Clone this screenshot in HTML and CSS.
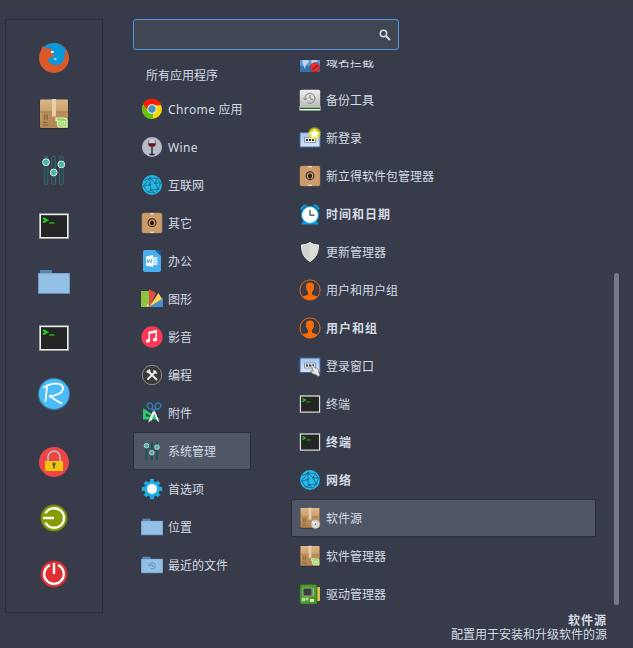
FILE: index.html
```html
<!DOCTYPE html>
<html lang="zh-CN">
<head>
<meta charset="utf-8">
<title>应用程序菜单</title>
<link rel="stylesheet" href="styles.css">
</head>
<body>
<svg class="defs" aria-hidden="true">
  <defs>
    <linearGradient id="card" x1="0" y1="0" x2="0" y2="1"><stop offset="0" stop-color="#dcb98a"/><stop offset=".45" stop-color="#c79c68"/><stop offset="1" stop-color="#b58a58"/></linearGradient>
    <linearGradient id="grey" x1="0" y1="0" x2="0" y2="1"><stop offset="0" stop-color="#eeeeee"/><stop offset="1" stop-color="#b9b9b7"/></linearGradient>
    <linearGradient id="screen" x1="0" y1="0" x2="0" y2="1"><stop offset="0" stop-color="#a9c3e6"/><stop offset="1" stop-color="#d9e5f3"/></linearGradient>
    <radialGradient id="glow"><stop offset="0" stop-color="#fff200"/><stop offset=".65" stop-color="#f7ea10" stop-opacity=".85"/><stop offset="1" stop-color="#f7ea10" stop-opacity="0"/></radialGradient>
  </defs>
  <symbol id="firefox" viewBox="0 0 32 32">
    <circle cx="16" cy="16" r="15" fill="#dd5827"/>
    <path d="M6 5C9 2 14 1 18 1c5 1 10 5 11 10l-2-2c0 8-2 13-7 14-4 1-7-1-9-4-2-3 0-5 4-4l1-3-3-1 1-3-3-2-3 1z" fill="#0699dc"/>
    <path d="M3 8l2-4 3 3 4 0 2 3-1 3 2 2-4 1c-2 2 0 5 1 6l-7-4z" fill="#dd5827"/>
    <path d="M10 17q2-2 5-1l1 3q-2 3-4 2-2-2-2-4z" fill="#0699dc"/>
    <path d="M13 9l3 0-1 2-2 0zM16 16l3 1-2 1.500z" fill="#fff"/>
  </symbol>
  <symbol id="box" viewBox="0 0 32 32">
    <rect x="1.500" y="2" width="29" height="29.200" rx="1.500" fill="#29292e"/>
    <rect x="2" y="1.500" width="28" height="28.500" rx="1" fill="url(#card)"/>
    <path d="M4 14H28V28.500H4z" fill="#a67b4b" opacity=".35"/>
    <path d="M2 14H30" stroke="#9a7347" stroke-width=".7"/>
    <path d="M14 1H18V18.500H14z" fill="#e6cfa9"/>
    <path d="M6 16.500h1.500v5H6zM8.500 16.500H10v5H8.500zM5 24h4.500v1H5zM5 26.500h5v1H5z" fill="#7e592f" opacity=".7"/>
  </symbol>
  <symbol id="mintbox" viewBox="0 0 32 32">
    <use href="#box"/>
    <path d="M18 20H25.500q3.500 0 3.500 3.500V29H22.500q-3 0-3-3V22.500H18z" fill="#92d65a" stroke="#e3f4cd" stroke-width="1.200"/>
    <path d="M22 22.500v2.500q0 1.500 1.500 1.500h3v-3h-2.500v1.500" fill="none" stroke="#eefae0" stroke-width="1"/>
  </symbol>
  <symbol id="discbox" viewBox="0 0 32 32">
    <use href="#box"/>
    <circle cx="24" cy="25" r="6.500" fill="#d9d8d8" stroke="#999"/><path d="M24 25L18 22.500 20 20z" fill="#fff"/><circle cx="24" cy="25" r="1.900" fill="#8b6f52" stroke="#fff"/>
  </symbol>
  <symbol id="sliders" viewBox="0 0 32 32">
    <path d="M8 4V28.500M15.700 4V28.500M23.300 4V28.500" stroke="#466774" stroke-width="4.600" stroke-linecap="round"/>
    <path d="M8 4V28.500M15.700 4V28.500M23.300 4V28.500" stroke="#2a4a58" stroke-width="3.200" stroke-linecap="round"/>
    <g fill="#43b8a2" stroke="#d9eee9" stroke-width="1"><circle cx="8" cy="8.200" r="3.400"/><circle cx="15.700" cy="18.500" r="3.400"/><circle cx="23.300" cy="10.400" r="3.400"/></g>
  </symbol>
  <symbol id="term" viewBox="0 0 32 32">
    <path d="M1 3H31V29H1z" fill="#8d8f90"/><path d="M1.700 4H30.300V28.200H1.700z" fill="#eceeed"/><path d="M3 5.200H29V27H3z" fill="#242424"/>
    <path d="M5 8l4 2.200L5 12.400" fill="none" stroke="#28ce1d" stroke-width="2"/><path d="M11 13h5.500" stroke="#219b20" stroke-width="1.800"/>
  </symbol>
  <symbol id="folder" viewBox="0 0 32 32">
    <path d="M2 4H14V9H2z" fill="#528ab5"/><path d="M0 7H32V28H0z" fill="#638eb0"/><path d="M.700 7.500H31.300V27H.700z" fill="#93c0e4"/>
  </symbol>
  <symbol id="recent" viewBox="0 0 32 32">
    <use href="#folder"/><path d="M12 16a4.500 4.500 0 1 1 2 5M10.500 15l1.500 2.500 2.200-1.500M16 14.500v3l2.500 1" fill="none" stroke="#5188b4" stroke-width="1.200"/>
  </symbol>
  <symbol id="rlogo" viewBox="0 0 32 32">
    <circle cx="16" cy="16" r="16" fill="#3380aa"/><circle cx="16" cy="16" r="15" fill="#4bbcf8"/>
    <path d="M9 9L7.500 23M6 9.500C10 6 18 4.500 22.500 6.500c4 2 3 7-2 9.500-3 1.500-7 2.200-9.500 2.200 5 1.500 8 6 12.500 7" fill="none" stroke="#fff" stroke-width="1.800" stroke-linecap="round"/>
  </symbol>
  <symbol id="lock" viewBox="0 0 32 32">
    <circle cx="16" cy="16" r="15" fill="#ee4646"/><path d="M10 15V11a6 6 0 0 1 12 0v4" fill="none" stroke="#bbbcc5" stroke-width="1.600"/>
    <path d="M7 15H25V25H7z" fill="#f2c511"/><circle cx="16" cy="18" r="1.500" fill="#37424a"/><path d="M16 18V22.500" stroke="#37424a" stroke-width="1.300"/>
  </symbol>
  <symbol id="logout" viewBox="0 0 32 32">
    <circle cx="16" cy="16" r="13.500" fill="#6d8011"/><circle cx="16" cy="16" r="12.600" fill="#879c00"/>
    <path d="M7.500 11.500a9.800 9.800 0 1 1 0 9M5 16H16" fill="none" stroke="#fff" stroke-width="2.400"/>
  </symbol>
  <symbol id="power" viewBox="0 0 32 32">
    <circle cx="16" cy="16" r="13.500" fill="#bd3032"/><circle cx="16" cy="16" r="12.600" fill="#de3030"/>
    <path d="M12 7.100a9.800 9.800 0 1 0 8 0M16 5V16" fill="none" stroke="#fff" stroke-width="2.400"/>
  </symbol>
  <symbol id="chrome" viewBox="0 0 22 22">
    <circle cx="11" cy="11" r="10" fill="#f8d806"/>
    <path d="M2 6.500A10 10 0 0 1 20.300 7.200H11L7 13z" fill="#fb1b08"/>
    <path d="M2 6.500L7.200 14 12.500 14.500 11.500 21A10 10 0 0 1 2 6.500z" fill="#62c40e"/>
    <circle cx="11" cy="11" r="4.800" fill="#f2f4ee"/><circle cx="11" cy="11" r="3.700" fill="#4194bd"/>
  </symbol>
  <symbol id="wine" viewBox="0 0 22 22">
    <circle cx="11" cy="11" r="10" fill="#b9bdc9"/>
    <path d="M8 4C6.500 9 8 11 11 11s4.500-2 3-7" fill="#ccd0d6" stroke="#625f66" stroke-width=".8"/><path d="M7.500 7.200h7c.2 2.600-1.500 3.500-3.500 3.500s-3.700-.9-3.500-3.500z" fill="#700d17"/>
    <path d="M11 11v7M8.500 18.500h5" stroke="#282329" stroke-width="1.400"/>
  </symbol>
  <symbol id="globe" viewBox="0 0 22 22">
    <circle cx="11" cy="11" r="9.900" fill="#22bbed"/>
    <path d="M3 6.500L9 4l7 .5L19.500 9l-2 6-4 4-7-1-4-6L9 4M2.500 12l6.500-1.500L10 16l7.500-1M10 16l-3.500 2M16.500 4.500L14 9l3.500 6M14 9l5.500 0M9 4l5 5M9 10.500V4M10 16l3.500 3" fill="none" stroke="#245d78" stroke-width=".8"/>
    <g fill="#1a5876"><circle cx="9" cy="4" r=".9"/><circle cx="9" cy="10.500" r=".9"/><circle cx="14" cy="9" r=".9"/><circle cx="10" cy="16" r=".9"/><circle cx="17" cy="15" r=".9"/></g>
  </symbol>
  <symbol id="package" viewBox="0 0 22 22">
    <rect x="1" y="1" width="20" height="20" rx="1.700" fill="#cb9c6c" stroke="#ad8058" stroke-width=".5"/><path d="M9 1h4v1.500H9zM9 19.500h4V21H9z" fill="#efcfa9"/>
    <circle cx="11" cy="10.700" r="3.900" fill="none" stroke="#36271c" stroke-width="1.100"/><path d="M11 7.500v5M9.500 9.500h3v2.500L11 13.500 9.500 12z" fill="#291b15" stroke="#291b15" stroke-width=".7"/>
  </symbol>
  <symbol id="office" viewBox="0 0 22 22">
    <path d="M3.500 0H14l6 6v14q0 2-1.500 2h-15Q2 22 2 20V2Q2 0 3.500 0z" fill="#4aaeec"/><path d="M14 0h6v6z" fill="#155f96"/><path d="M5 6.500l7-1.500v12l-7-1.500z" fill="#fff"/><path d="M12 7h4.500v8H12z" fill="#d4eefb"/><path d="M6.200 9l.8 4 1.400-3.500L9.800 13l.8-4" stroke="#4aaeec" fill="none"/><path d="M13 8.500h3M13 10.500h3M13 12.500h3" stroke="#8bcced" stroke-width=".6"/>
  </symbol>
  <symbol id="graphics" viewBox="0 0 22 22">
    <path d="M0 3h8v16H0z" fill="#8bc53f"/><path d="M8 1l7 4-6.500 14H8z" fill="#e74a4a"/><path d="M22 9.500V19H8z" fill="#488ed0"/><path d="M17.500 5l3.500 6L8 19z" fill="#ffd64e"/><circle cx="6.500" cy="17.300" r=".9" fill="#fff"/>
  </symbol>
  <symbol id="music" viewBox="0 0 22 22">
    <circle cx="11" cy="11" r="10.700" fill="#fb3954"/><path d="M8.200 14.500V6.500L15.200 5v8" fill="none" stroke="#fff" stroke-width="1.500"/><path d="M8 5.800L16 4v2.500L8 8z" fill="#fff"/><ellipse cx="7" cy="15" rx="2.200" ry="1.800" fill="#fff"/><ellipse cx="14" cy="13.700" rx="2.200" ry="1.800" fill="#fff"/>
  </symbol>
  <symbol id="tools" viewBox="0 0 22 22">
    <circle cx="11" cy="11" r="9.700" fill="#3c3838" stroke="#92908e" stroke-width="1"/><path d="M7 7l8.500 8.500M14.500 7.500L7 15" stroke="#ececea" stroke-width="1.900" stroke-linecap="round"/><path d="M5.500 7.500l2 1.200 1.500-1.500-1-2M13 5.700a2.500 2.500 0 0 0 3.200 3.200" stroke="#ececea" stroke-width="1.200" fill="none"/>
  </symbol>
  <symbol id="accessory" viewBox="0 0 22 22">
    <path d="M2 6v11.500h17.500zM5 11.500v3h5.500z" fill="#2bc76c" fill-rule="evenodd"/><path d="M13 6.500L7 20.500l3.500-2L13 12l3 6.500 2.500 2z" fill="#eff4f6"/><g fill="none" stroke="#2d78ae" stroke-width="1.500"><ellipse cx="9" cy="4" rx="2.600" ry="3" transform="rotate(-25 9 4)"/><ellipse cx="17" cy="4" rx="2.600" ry="3" transform="rotate(25 17 4)"/><path d="M10.500 6.500L13 9l2.500-2.500"/></g>
  </symbol>
  <symbol id="gear" viewBox="0 0 22 22">
    <g stroke="#22aee1" stroke-width="3.800"><path d="M11 .8V21.200M.8 11H21.200"/><path d="M4 4l14 14M18 4L4 18"/></g><circle cx="11" cy="11" r="7.800" fill="#22aee1"/><circle cx="11" cy="11" r="5" fill="#fff"/>
  </symbol>
  <symbol id="block" viewBox="0 0 22 22">
    <path d="M1 3h20v18H1z" fill="#3672af"/><path d="M1 3h20v12H1z" fill="#5b93cc"/><path d="M3 8h6l1 3-3 3-1 4-2-4zM12 7h7l-1 4-3 1-2 4z" fill="#b9d7f0"/><circle cx="16" cy="16.500" r="4.700" fill="#e5302d" stroke="#a4151a" stroke-width=".5"/><path d="M13.500 18.500l5-4" stroke="#8f1719" stroke-width="1.600"/>
  </symbol>
  <symbol id="backup" viewBox="0 0 22 22">
    <path d="M.5 17h21v4.500H.5z" fill="#eef0ee"/><path d="M1 18.500h20V20H1z" fill="#166c18"/><rect x=".8" y=".7" width="20.400" height="17.500" rx="1.500" fill="url(#grey)"/><path d="M6 10a5 5 0 1 1 2.500 3.700M4.500 9l1.700 2 1.800-2M11 6v3.500l3 1.500" fill="none" stroke="#818181" stroke-width="1"/>
  </symbol>
  <symbol id="login" viewBox="0 0 22 22">
    <path d="M.5 2.500h21v15.500H.5z" fill="#386ba8"/><path d="M1.500 3.500h19V17h-19z" fill="url(#screen)"/><path d="M5.500 8h11v5h-11z" fill="#eef1f5" stroke="#6385b3" stroke-width=".8"/><path d="M7 9.500h2v2H7zM10 9.500h2v2h-2zM13 9.500h2v2h-2z" fill="#242931"/>
  </symbol>
  <symbol id="newlogin" viewBox="0 0 22 22">
    <svg y="3" width="22" height="19" viewBox="0 1 22 18"><use href="#login" width="22" height="22"/></svg><circle cx="15.500" cy="6.500" r="7" fill="url(#glow)"/><path d="M15.500 1.800l1.500 3 3.300.5-2.400 2.400.6 3.300-3-1.500-3 1.500.6-3.300-2.400-2.400 3.300-.5z" fill="#fffff0"/>
  </symbol>
  <symbol id="handlogin" viewBox="0 0 22 22">
    <use href="#login"/><path d="M12.500 10.500c1.500-1 2.500 1 3.500 2.500 3-.5 3.500 1.500 3.500 4l1.500 3-2 1.500-2-2c-3 0-4.500-1.500-5.500-3.500 1-.7 2 0 2.700.6z" fill="#eceae8" stroke="#77777a" stroke-width=".7"/>
  </symbol>
  <symbol id="clock" viewBox="0 0 22 22">
    <path d="M4.500 18l-2.500 3.500h18L17.500 18" fill="#0a9ada"/><path d="M2 6.500Q3.500 3 7.500 2M20 6.500Q18.500 3 14.500 2" fill="none" stroke="#0a9ada" stroke-width="2"/><circle cx="11" cy="12" r="8.500" fill="#fff" stroke="#0ba5e2" stroke-width="1.200"/><path d="M11 7v5.200h4.500" fill="none" stroke="#34424b" stroke-width="1.200"/>
  </symbol>
  <symbol id="shield" viewBox="0 0 22 22">
    <path d="M11 1.500c2.500 2 5.500 2.200 8.500 2.500-.2 8-2.500 13-8.500 16.500C5 17 2.700 12 2.500 4c3-.3 6-.5 8.500-2.500z" fill="#d2d3d0" stroke="#f5f5f1" stroke-width="1"/><path d="M11 3c2.300 1.700 4.500 1.900 7.200 2.200C18 11 16 15 11 18.500z" fill="#dedfdc"/>
  </symbol>
  <symbol id="user" viewBox="0 0 22 22">
    <circle cx="11" cy="11" r="10.100" fill="none" stroke="#e96a0f" stroke-width="1"/><path d="M11 3.500c3 0 4.300 1.800 4 4.800-.2 2.500-1 4-2 4.700v2.500c2 1.300 4.500 1.300 5.500 2.500-3.500 4-11.500 4-15 0 1-1.200 3.500-1.200 5.500-2.500V13c-1-.7-1.800-2.200-2-4.700-.3-3 1-4.800 4-4.800z" fill="#f96c04"/>
  </symbol>
  <symbol id="board" viewBox="0 0 22 22">
    <path d="M17 4h4v14h-4z" fill="#e0bf4c"/><path d="M1 3Q1 1.500 2.500 1.500H17l1 2V20q0 1-1 1H2.500Q1 21 1 19.500z" fill="#4d9931" stroke="#286b1b" stroke-width=".7"/><path d="M4 5h9v8H4z" fill="#393f3e" stroke="#a4b69c" stroke-width=".8"/><path d="M3 15h3v3H3zM7 15h2v2H7zM14.500 5v8" fill="#b9d49b" stroke="#b3d391" stroke-width=".7"/><path d="M11 16h4v3h-4z" fill="#e9dbb6"/>
  </symbol>
</svg>

<main class="menu">
  <nav class="favorites">
    <svg><use href="#firefox"/></svg>
    <svg><use href="#mintbox"/></svg>
    <svg><use href="#sliders"/></svg>
    <svg><use href="#term"/></svg>
    <svg><use href="#folder"/></svg>
    <svg><use href="#term"/></svg>
    <svg><use href="#rlogo"/></svg>
    <svg class="session"><use href="#lock"/></svg>
    <svg><use href="#logout"/></svg>
    <svg><use href="#power"/></svg>
  </nav>
  <section class="content">
    <div class="search">
      <svg viewBox="0 0 12 12"><circle cx="4.500" cy="4.500" r="3.200" fill="none" stroke="#d3dae3" stroke-width="1.500"/><path d="M7 7l4 4" stroke="#d3dae3" stroke-width="2"/></svg>
    </div>
    <div class="panes">
      <ul class="categories">
        <li class="heading">所有应用程序</li>
        <li><svg><use href="#chrome"/></svg><span><span class="latin">Chrome</span> 应用</span></li>
        <li><svg><use href="#wine"/></svg><span class="latin">Wine</span></li>
        <li><svg><use href="#globe"/></svg>互联网</li>
        <li><svg><use href="#package"/></svg>其它</li>
        <li><svg><use href="#office"/></svg>办公</li>
        <li><svg><use href="#graphics"/></svg>图形</li>
        <li><svg><use href="#music"/></svg>影音</li>
        <li><svg><use href="#tools"/></svg>编程</li>
        <li><svg><use href="#accessory"/></svg>附件</li>
        <li class="selected"><svg><use href="#sliders"/></svg>系统管理</li>
        <li><svg><use href="#gear"/></svg>首选项</li>
        <li><svg><use href="#folder"/></svg>位置</li>
        <li><svg><use href="#recent"/></svg>最近的文件</li>
      </ul>
      <div class="viewport">
        <ul class="apps">
          <li><svg><use href="#block"/></svg>域名拦截</li>
          <li><svg><use href="#backup"/></svg>备份工具</li>
          <li><svg><use href="#newlogin"/></svg>新登录</li>
          <li><svg><use href="#package"/></svg>新立得软件包管理器</li>
          <li class="bold"><svg><use href="#clock"/></svg>时间和日期</li>
          <li><svg><use href="#shield"/></svg>更新管理器</li>
          <li><svg><use href="#user"/></svg>用户和用户组</li>
          <li class="bold"><svg><use href="#user"/></svg>用户和组</li>
          <li><svg><use href="#handlogin"/></svg>登录窗口</li>
          <li><svg><use href="#term"/></svg>终端</li>
          <li class="bold"><svg><use href="#term"/></svg>终端</li>
          <li class="bold"><svg><use href="#globe"/></svg>网络</li>
          <li class="selected"><svg><use href="#discbox"/></svg>软件源</li>
          <li><svg><use href="#mintbox"/></svg>软件管理器</li>
          <li><svg><use href="#board"/></svg>驱动管理器</li>
        </ul>
        <div class="scrollbar"></div>
      </div>
    </div>
    <footer class="details">
      <strong>软件源</strong>
      <span>配置用于安装和升级软件的源</span>
    </footer>
  </section>
</main>
</body>
</html>
```
FILE: styles.css
```css
* { box-sizing: border-box; }

body {
  margin: 0;
  background: #383c4a;
  color: #d3dae3;
  font: 12px/16px "Noto Sans", "Noto Sans CJK SC", sans-serif;
}

ul { list-style: none; margin: 0; padding: 0; }

svg { display: block; flex: none; }

.defs { position: absolute; width: 0; height: 0; }

.menu {
  display: flex;
  gap: 30px;
  width: 633px;
  height: 648px;
  padding: 18px 0 0 5px;
  border-top: 1px solid #3e3e3e;
  overflow: hidden;
}

.favorites {
  display: flex;
  flex-direction: column;
  align-items: center;
  gap: 24px;
  width: 98px;
  height: 594px;
  padding-top: 22px;
  border: 1px solid #2b2e39;
}

.favorites svg { width: 32px; height: 32px; }

.favorites .session { margin-top: 12px; }

.content { width: 487px; }

.search {
  display: flex;
  align-items: center;
  justify-content: flex-end;
  width: 266px;
  height: 31px;
  padding-right: 7px;
  border: 1px solid #5294e2;
  border-radius: 3px;
  background: #404552;
}

.search svg { width: 12px; height: 12px; }

.panes {
  display: flex;
  gap: 40px;
  height: 545px;
  margin-top: 10px;
}

.categories { width: 118px; }

.categories li,
.apps li {
  display: flex;
  align-items: center;
  gap: 5px;
  height: 38px;
  padding: 2px 0 0 7px;
  border: 1px solid transparent;
  border-radius: 2px;
  white-space: nowrap;
}

.categories .heading {
  height: 30px;
  padding-left: 12px;
}

.categories svg,
.apps svg {
  width: 22px;
  height: 22px;
  margin-top: -2px;
}

.latin { letter-spacing: .4px; }

.categories .selected,
.apps .selected {
  background: #505666;
  border-color: #2b2e39;
}

.viewport {
  display: flex;
  justify-content: space-between;
  width: 328px;
  overflow: hidden;
}

.apps {
  width: 305px;
  margin-top: -17px;
}

.bold {
  font-weight: 700;
  letter-spacing: 1px;
}

.scrollbar {
  width: 5px;
  height: 332px;
  margin-top: 213px;
  border-radius: 3px;
  background: #767b87;
}

.details {
  display: flex;
  flex-direction: column;
  align-items: flex-end;
  width: 474px;
  padding-top: 9px;
  line-height: 14px;
}

.details strong { letter-spacing: 1px; }
```
